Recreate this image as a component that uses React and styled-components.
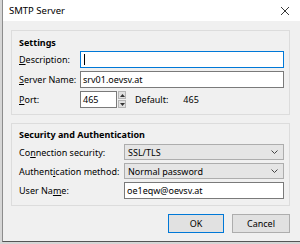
import styled, { createGlobalStyle } from "styled-components";

const Global = createGlobalStyle`
  html, body { margin: 0; padding: 0; background: #d6d6d6; }
  body { font-family: "Noto Sans", "Open Sans", sans-serif; font-size: 9px; color: #000; }
`;

const Screen = styled.div`
  width: 300px;
  height: 244px;
  display: flex;
  flex-direction: column;
  overflow: hidden;
`;

const Window = styled.div`
  margin-left: 2px;
  height: 241px;
  border-left: 1px solid #8c8c8c;
  border-bottom: 1px solid #555;
  background: #f0f0f0;
  display: flex;
  flex-direction: column;
`;

const TitleBar = styled.div`
  height: 21px;
  background: #fff;
  display: flex;
  align-items: center;
  justify-content: space-between;
  padding: 0 10px 0 6px;
  font-size: 9.5px;
`;

const Close = styled.svg`
  width: 10px;
  height: 10px;
`;

const Body = styled.div`
  padding: 9px 10px 0 8px;
  display: flex;
  flex-direction: column;
`;

const Group = styled.div`
  border: 1px solid #dcdcdc;
  padding: ${p => p.$pad || "6px 5px 6px 7px"};
  margin-bottom: ${p => p.$mb || "0"};
  display: grid;
  grid-template-columns: ${p => p.$label}px 1fr;
  row-gap: 3px;
  align-items: center;
`;

const Heading = styled.div`
  grid-column: 1 / -1;
  font-weight: bold;
  line-height: 12px;
  margin-bottom: ${p => p.$mb || "-1px"};
`;

const Label = styled.div`
  white-space: nowrap;
  u { text-decoration: underline; text-underline-offset: 1px; }
`;

const Input = styled.div`
  height: 15px;
  border: 1px solid ${p => (p.$focus ? "#0078d7" : "#7a7a7a")};
  background: #fff;
  display: flex;
  align-items: center;
  padding-left: 2px;
`;

const Caret = styled.span`
  width: 1px;
  height: 11px;
  background: #000;
  margin-left: 1px;
`;

const PortRow = styled.div`
  display: flex;
  align-items: center;
`;

const PortInput = styled(Input)`
  width: 33px;
`;

const Spinner = styled.div`
  width: 8px;
  height: 17px;
  margin-left: 1px;
  display: flex;
  flex-direction: column;
  gap: 1px;
`;

const SpinHalf = styled.div`
  flex: 1;
  background: #e1e1e1;
  border: 1px solid #b5b5b5;
  display: flex;
  align-items: center;
  justify-content: center;
`;

const DefaultText = styled.span`
  margin-left: 9px;
  & + span { margin-left: 15px; }
`;

const Select = styled.div`
  height: 14px;
  border: 1px solid #adadad;
  background: #e5e5e5;
  display: flex;
  align-items: center;
  justify-content: space-between;
  padding: 0 5px 0 3px;
`;

const Buttons = styled.div`
  display: flex;
  justify-content: flex-end;
  gap: 8px;
  padding: 8px 0 0 0;
`;

const Button = styled.div`
  width: ${p => (p.$default ? 54 : 56)}px;
  height: 17px;
  border: 1px solid ${p => (p.$default ? "#0078d7" : "#adadad")};
  background: #e1e1e1;
  display: flex;
  align-items: center;
  justify-content: center;
`;

const Chevron = () => (
  <svg width="7" height="4" viewBox="0 0 7 4">
    <path d="M0.5 0.5 L3.5 3.5 L6.5 0.5" fill="none" stroke="#444" strokeWidth="1" />
  </svg>
);

const Tri = ({ up }) => (
  <svg width="5" height="3" viewBox="0 0 5 3">
    <path d={up ? "M0 3 L2.5 0 L5 3 Z" : "M0 0 L2.5 3 L5 0 Z"} fill="#333" />
  </svg>
);

export default function App() {
  return (
    <Screen>
      <Global />
      <Window>
        <TitleBar>
          <span>SMTP Server</span>
          <Close viewBox="0 0 10 10">
            <path d="M1 1 L9 9 M9 1 L1 9" stroke="#222" strokeWidth="0.9" />
          </Close>
        </TitleBar>
        <Body>
          <Group $label={61} $mb="8px">
            <Heading>Settings</Heading>
            <Label><u>D</u>escription:</Label>
            <Input $focus><Caret /></Input>
            <Label><u>S</u>erver Name:</Label>
            <Input>srv01.oevsv.at</Input>
            <Label><u>P</u>ort:</Label>
            <PortRow>
              <PortInput>465</PortInput>
              <Spinner>
                <SpinHalf><Tri up /></SpinHalf>
                <SpinHalf><Tri /></SpinHalf>
              </Spinner>
              <DefaultText>Default:</DefaultText>
              <span>465</span>
            </PortRow>
          </Group>
          <Group $label={105} $pad="5px 5px 6px 7px">
            <Heading $mb="0">Security and Authentication</Heading>
            <Label>Co<u>n</u>nection security:</Label>
            <Select>SSL/TLS<Chevron /></Select>
            <Label>Authent<u>i</u>cation method:</Label>
            <Select>Normal password<Chevron /></Select>
            <Label>User Na<u>m</u>e:</Label>
            <Input>oe1eqw@oevsv.at</Input>
          </Group>
          <Buttons>
            <Button $default>OK</Button>
            <Button>Cancel</Button>
          </Buttons>
        </Body>
      </Window>
    </Screen>
  );
}
